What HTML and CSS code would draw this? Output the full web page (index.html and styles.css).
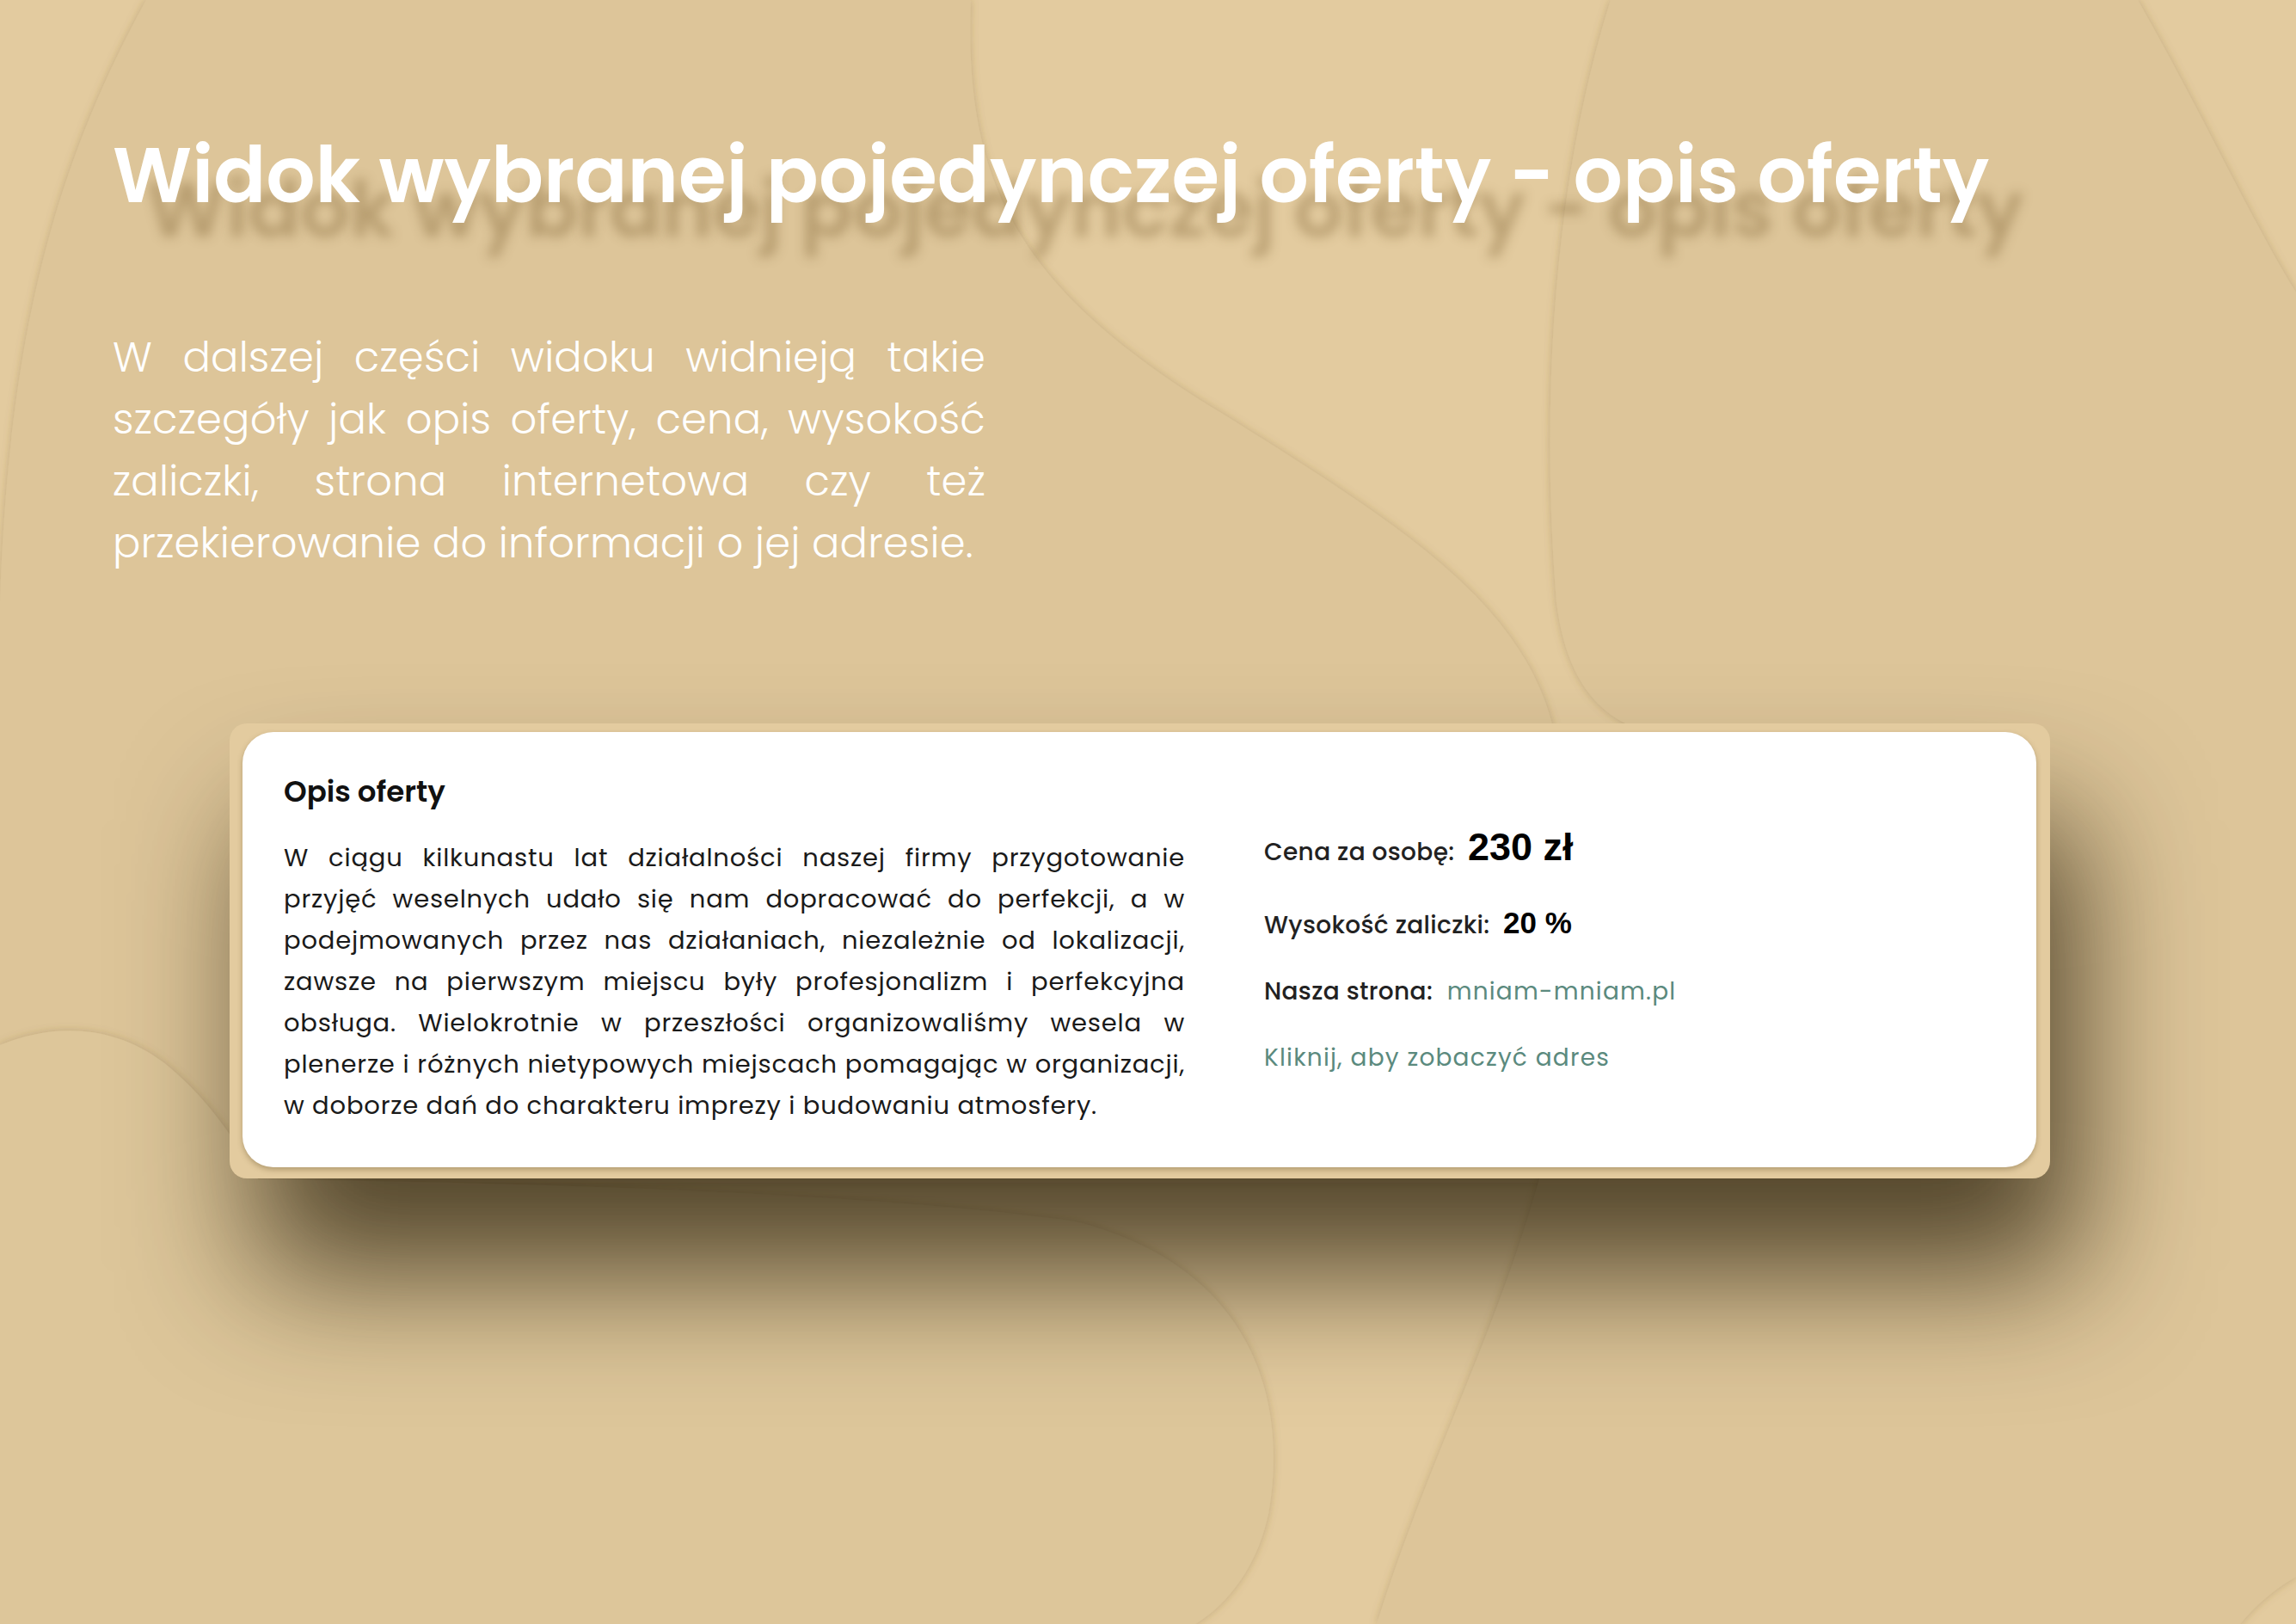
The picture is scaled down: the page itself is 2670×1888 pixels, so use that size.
FILE: index.html
```html
<!DOCTYPE html>
<html lang="pl">
<head>
<meta charset="utf-8">
<title>Widok wybranej pojedynczej oferty</title>
<link rel="stylesheet" href="styles.css">
</head>
<body>
<svg class="bg" width="2670" height="1888" viewBox="0 0 2670 1888" aria-hidden="true">
  <defs>
    <filter id="edge" x="-5%" y="-5%" width="110%" height="110%">
      <feDropShadow dx="0" dy="0" stdDeviation="5" flood-color="#7a5f30" flood-opacity="0.3"/>
    </filter>
  </defs>
  <rect width="2670" height="1888" fill="#e3cb9f"/>
  <path filter="url(#edge)" fill="#ddc599" d="M170 0 H1129 C1120 220 1190 340 1420 480 C1660 630 1800 720 1815 900 L1800 1375 L0 1375 V700 C10 400 60 200 170 0 Z"/>
  <path filter="url(#edge)" fill="#ddc599" d="M1873 0 H2486 C2560 130 2620 260 2670 340 V1833 C2640 1850 2620 1870 2605 1888 H1601 C1660 1700 1740 1550 1790 1371 L1890 841 C1850 820 1820 780 1810 700 C1790 450 1810 200 1873 0 Z"/>
  <path filter="url(#edge)" fill="#ddc69a" d="M0 1215 C60 1190 130 1190 190 1235 C240 1275 270 1320 300 1371 C600 1375 1000 1385 1250 1420 C1450 1470 1500 1620 1475 1760 C1460 1830 1420 1870 1390 1888 H0 Z"/>
</svg>

<main class="page">
  <h1 class="title">Widok wybranej pojedynczej oferty - opis oferty</h1>

  <p class="intro">
    <span class="ln">W dalszej części widoku widnieją takie</span>
    <span class="ln">szczegóły jak opis oferty, cena, wysokość</span>
    <span class="ln">zaliczki, strona internetowa czy też</span>
    <span class="ln last">przekierowanie do informacji o jej adresie.</span>
  </p>

  <section class="frame">
    <div class="card">
      <div class="desc">
        <h2 class="desc-title">Opis oferty</h2>
        <p class="desc-text">
          <span class="ln">W ciągu kilkunastu lat działalności naszej firmy przygotowanie</span>
          <span class="ln">przyjęć weselnych udało się nam dopracować do perfekcji, a w</span>
          <span class="ln">podejmowanych przez nas działaniach, niezależnie od lokalizacji,</span>
          <span class="ln">zawsze na pierwszym miejscu były profesjonalizm i perfekcyjna</span>
          <span class="ln">obsługa. Wielokrotnie w przeszłości organizowaliśmy wesela w</span>
          <span class="ln">plenerze i różnych nietypowych miejscach pomagając w organizacji,</span>
          <span class="ln last">w doborze dań do charakteru imprezy i budowaniu atmosfery.</span>
        </p>
      </div>
      <div class="details">
        <div class="row first"><span class="label">Cena za osobę:</span> <strong class="price">230 zł</strong></div>
        <div class="row"><span class="label">Wysokość zaliczki:</span> <strong class="pct">20 %</strong></div>
        <div class="row"><span class="label">Nasza strona:</span> <a class="link" href="#">mniam-mniam.pl</a></div>
        <div class="row"><a class="link plain" href="#">Kliknij, aby zobaczyć adres</a></div>
      </div>
    </div>
  </section>
</main>
</body>
</html>
```
FILE: styles.css
```css
html, body {
  margin: 0;
  padding: 0;
}
body {
  width: 2670px;
  height: 1888px;
  overflow: hidden;
  position: relative;
  background: #e3cb9f;
  font-family: "Poppins", Inter, "Noto Sans", sans-serif;
}
.bg {
  position: absolute;
  left: 0;
  top: 0;
  z-index: 0;
}
.page {
  position: relative;
  z-index: 1;
  padding: 159px 0 0 131px;
}
.title {
  margin: 0;
  font-size: 90px;
  line-height: 90px;
  font-weight: 600;
  color: #fff;
  white-space: nowrap;
  text-shadow: 40px 40px 13px rgba(120, 92, 45, 0.38);
}
.intro {
  margin: 131px 0 0;
  width: 1015px;
  font-size: 48px;
  line-height: 72px;
  font-weight: 300;
  letter-spacing: 0.2px;
  color: #fff;
}
.ln {
  display: block;
  white-space: nowrap;
  text-align: justify;
  text-align-last: justify;
}
.ln.last {
  text-align-last: left;
}
.frame {
  margin: 173px 0 0 136px;
  width: 2117px;
  box-sizing: border-box;
  padding: 10px 16px 13px 15px;
  background: #e3cb9f;
  border-radius: 20px;
  box-shadow: 30px 110px 150px 0 rgba(35, 25, 5, 0.75);
}
.card {
  background: #fff;
  border-radius: 36px;
  box-shadow: 0 3px 6px rgba(90, 70, 30, 0.35);
  display: grid;
  grid-template-columns: 1048px 1fr;
  column-gap: 92px;
  padding: 49px 48px 48px 48px;
}
.desc-title {
  margin: 0 0 33px;
  font-size: 34px;
  line-height: 40px;
  font-weight: 600;
  color: #111;
}
.desc-text {
  margin: 0;
  font-size: 29px;
  line-height: 48px;
  letter-spacing: 0.8px;
  color: #1a1a1a;
}
.details {
  padding-top: 61px;
}
.row {
  font-size: 28px;
  line-height: 48px;
  color: #222;
  margin-bottom: 29px;
}
.row.first {
  margin-bottom: 34px;
}
.label {
  font-weight: 500;
  letter-spacing: 0.35px;
}
.row strong {
  font-family: "Liberation Sans", Arial, sans-serif;
  font-weight: 700;
  color: #000;
}
.price {
  font-size: 45px;
  margin-left: 8px;
}
.pct {
  font-size: 35px;
  margin-left: 8px;
}
.link {
  color: #5b8a7e;
  font-weight: 400;
  letter-spacing: 1.2px;
  text-decoration: none;
  margin-left: 9px;
}
.link.plain {
  margin-left: 0;
}
```
